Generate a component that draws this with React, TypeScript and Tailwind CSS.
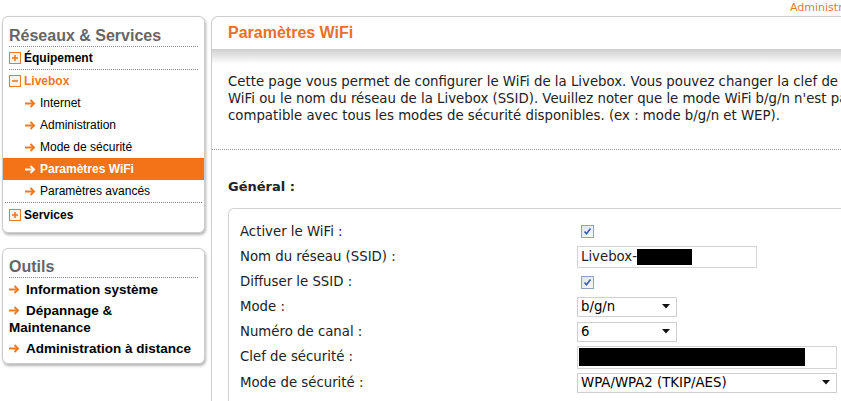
import React from 'react';

const sans = { fontFamily: '"Liberation Sans", Arial, sans-serif' };
const verdana = { fontFamily: '"DejaVu Sans", Verdana, sans-serif' };

function Arrow({ white = false }: { white?: boolean }) {
  const c = white ? '#ffffff' : '#ee7a22';
  return (
    <svg width="11" height="9" viewBox="0 0 11 9" className="inline-block shrink-0">
      <path d="M0 4.5 H8.5" stroke={c} strokeWidth="2" />
      <path d="M5.5 1 L9 4.5 L5.5 8" stroke={c} strokeWidth="2" fill="none" />
    </svg>
  );
}

function Toggle({ open }: { open: boolean }) {
  return (
    <svg width="12" height="12" viewBox="0 0 12 12" className="shrink-0">
      <rect x="0.5" y="0.5" width="11" height="11" fill="#fff4ea" stroke="#ee7a22" />
      <path d="M3 6 H9" stroke="#ee7a22" strokeWidth="1.6" />
      {!open && <path d="M6 3 V9" stroke="#ee7a22" strokeWidth="1.6" />}
    </svg>
  );
}

function Check() {
  return (
    <div className="w-[13px] h-[13px] border border-[#8ea4c1] bg-gradient-to-br from-[#dfe3ea] to-[#f7f8fa] flex items-center justify-center">
      <svg width="9" height="9" viewBox="0 0 9 9">
        <path d="M1.5 4.5 L3.5 6.8 L7.5 1.5" stroke="#3a5ea8" strokeWidth="1.6" fill="none" />
      </svg>
    </div>
  );
}

function Select({ value, width }: { value: string; width: string }) {
  return (
    <div className={`${width} h-[20px] border border-[#cfcfcf] bg-white flex items-center justify-between pl-[3px] pr-[6px]`}>
      <span className="text-[13.3px] text-black">{value}</span>
      <svg width="8" height="5" viewBox="0 0 8 5">
        <path d="M0 0 H8 L4 4.5 Z" fill="#111" />
      </svg>
    </div>
  );
}

const subItems = ['Internet', 'Administration', 'Mode de sécurité', 'Paramètres WiFi', 'Paramètres avancés'];

export default function App() {
  return (
    <div className="w-[841px] h-[401px] overflow-hidden bg-white relative" style={verdana}>
      {/* top strip */}
      <div className="h-[16px] flex items-center">
        <span className="ml-[790px] text-[11px] leading-[16px] text-[#e07a3a] whitespace-nowrap">Administration</span>
      </div>

      <div className="flex w-[1100px]">
        {/* sidebar */}
        <div className="w-[211px] shrink-0 pl-[2px] pr-[6px]" style={sans}>
          <div className="w-[203px] rounded-[6px] border border-[#cdcdcd] shadow-[1px_2px_3px_rgba(0,0,0,0.3)] pb-[6px] bg-white">
            <div className="mx-[6px] pt-[9px] pb-[1px] border-b border-dotted border-[#8a8a8a] text-[16px] leading-[19px] font-bold text-[#666]">
              Réseaux &amp; Services
            </div>
            <div className="mx-[6px] h-[23px] flex items-center gap-[3px] border-b border-dotted border-[#8a8a8a] text-[12px] font-bold text-black">
              <Toggle open={false} />
              <span>Équipement</span>
            </div>
            <div className="mx-[6px] h-[22px] flex items-center gap-[3px] text-[12px] font-bold text-[#ee7a22]">
              <Toggle open />
              <span>Livebox</span>
            </div>
            {subItems.map((s) => {
              const on = s === 'Paramètres WiFi';
              return (
                <div
                  key={s}
                  className={`h-[22px] flex items-center gap-[4px] pl-[22px] text-[12px] ${on ? 'bg-[#f47318] text-white font-bold' : 'text-black'}`}
                >
                  <Arrow white={on} />
                  <span>{s}</span>
                </div>
              );
            })}
            <div className="mx-[2px] border-t border-dotted border-[#8a8a8a]" />
            <div className="mx-[6px] h-[23px] flex items-center gap-[3px] text-[12px] font-bold text-black">
              <Toggle open={false} />
              <span>Services</span>
            </div>
          </div>

          <div className="mt-[15px] w-[203px] rounded-[6px] border border-[#cdcdcd] shadow-[1px_2px_3px_rgba(0,0,0,0.3)] pb-[6px] bg-white">
            <div className="mx-[6px] pt-[8px] pb-[1px] border-b border-dotted border-[#8a8a8a] text-[16px] leading-[19px] font-bold text-[#666]">
              Outils
            </div>
            <div className="px-[6px] pt-[3px] text-[13.5px] leading-[17px] font-bold text-black flex flex-col gap-[4px]">
              <div className="flex items-center gap-[6px]">
                <Arrow />
                <span>Information système</span>
              </div>
              <div>
                <span className="inline-flex items-center gap-[6px]">
                  <Arrow />
                  <span>Dépannage &amp;</span>
                </span>
                <br />
                Maintenance
              </div>
              <div className="flex items-center gap-[6px]">
                <Arrow />
                <span>Administration à distance</span>
              </div>
            </div>
          </div>
        </div>

        {/* main panel */}
        <div className="w-[700px] shrink-0 h-[385px] rounded-tl-[7px] border-l border-t border-[#cdcdcd] bg-white">
          <div className="h-[32px] flex items-center pl-[16px] text-[16px] font-bold text-[#e8702a]" style={sans}>
            Paramètres WiFi
          </div>
          <div className="h-[15px] bg-gradient-to-b from-[#cfcfcf] to-white" />
          <p className="pl-[16px] pt-[9px] text-[13.3px] leading-[17px] text-[#222] whitespace-nowrap">
            Cette page vous permet de configurer le WiFi de la Livebox. Vous pouvez changer la clef de
            <br />
            WiFi ou le nom du réseau de la Livebox (SSID). Veuillez noter que le mode WiFi b/g/n n'est pas
            <br />
            compatible avec tous les modes de sécurité disponibles. (ex : mode b/g/n et WEP).
          </p>
          <div className="mt-[25px] border-t border-dotted border-[#999]" />
          <div className="pl-[16px] pt-[28px] text-[13px] font-bold text-[#222] leading-[17px]">Général :</div>
          <div className="ml-[16px] mt-[13px] rounded-tl-[6px] border-l border-t border-[#d2d2d2] pl-[11px] pt-[10px] h-[200px] text-[13.3px] text-[#222]">
            <div className="h-[25px] flex items-center">
              <span className="w-[338px]">Activer le WiFi :</span>
              <div className="pl-[3px]"><Check /></div>
            </div>
            <div className="h-[26px] flex items-center">
              <span className="w-[337px]">Nom du réseau (SSID) :</span>
              <div className="w-[180px] h-[22px] border border-[#d4d4d4] flex items-center pl-[3px]">
                <span>Livebox-</span>
                <span className="w-[55px] h-[16px] bg-black" />
              </div>
            </div>
            <div className="h-[24px] flex items-center">
              <span className="w-[338px]">Diffuser le SSID :</span>
              <div className="pl-[3px]"><Check /></div>
            </div>
            <div className="h-[25px] flex items-center">
              <span className="w-[337px]">Mode :</span>
              <Select value="b/g/n" width="w-[100px]" />
            </div>
            <div className="h-[25px] flex items-center">
              <span className="w-[337px]">Numéro de canal :</span>
              <Select value="6" width="w-[100px]" />
            </div>
            <div className="h-[26px] flex items-center">
              <span className="w-[337px]">Clef de sécurité :</span>
              <div className="w-[260px] h-[23px] border border-[#d4d4d4] flex items-center pl-[1px]">
                <span className="w-[226px] h-[18px] bg-black" />
              </div>
            </div>
            <div className="h-[25px] flex items-center">
              <span className="w-[337px]">Mode de sécurité :</span>
              <Select value="WPA/WPA2 (TKIP/AES)" width="w-[260px]" />
            </div>
          </div>
        </div>
      </div>
    </div>
  );
}
